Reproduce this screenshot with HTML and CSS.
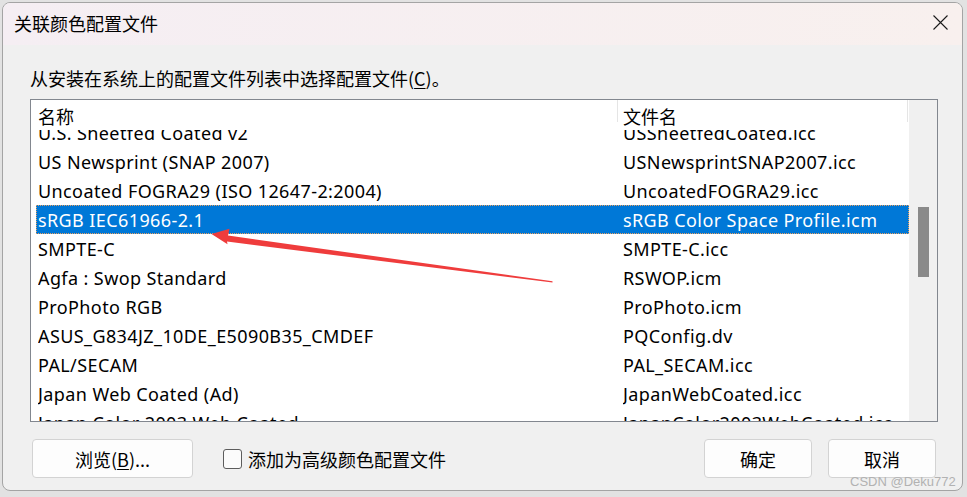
FILE: index.html
```html
<!DOCTYPE html>
<html lang="zh-CN">
<head>
<meta charset="utf-8">
<title>关联颜色配置文件</title>
<link rel="stylesheet" href="styles.css">
</head>
<body>
<div class="page">
  <div class="dialog">
    <div class="titlebar">
      <span class="title">关联颜色配置文件</span>
      <svg class="close" width="15" height="15" viewBox="0 0 15 15"><path d="M0.5 0.5 L14.5 14.5 M14.5 0.5 L0.5 14.5" stroke="#1a1a1a" stroke-width="1.1" fill="none"/></svg>
    </div>
    <div class="body">
      <div class="label">从安装在系统上的配置文件列表中选择配置文件(<u>C</u>)。</div>
      <div class="listview">
        <div class="lv-main">
          <div class="lv-header">
            <div class="hcell hcell-name">名称</div>
            <div class="hcell hcell-file">文件名</div>
          </div>
          <div class="lv-rows">
            <div class="row first"><span class="c1">U.S. Sheetfed Coated v2</span><span class="c2">USSheetfedCoated.icc</span></div>
            <div class="row"><span class="c1">US Newsprint (SNAP 2007)</span><span class="c2">USNewsprintSNAP2007.icc</span></div>
            <div class="row"><span class="c1">Uncoated FOGRA29 (ISO 12647-2:2004)</span><span class="c2">UncoatedFOGRA29.icc</span></div>
            <div class="row selected"><span class="c1">sRGB IEC61966-2.1</span><span class="c2">sRGB Color Space Profile.icm</span></div>
            <div class="row"><span class="c1">SMPTE-C</span><span class="c2">SMPTE-C.icc</span></div>
            <div class="row"><span class="c1">Agfa : Swop Standard</span><span class="c2">RSWOP.icm</span></div>
            <div class="row"><span class="c1">ProPhoto RGB</span><span class="c2">ProPhoto.icm</span></div>
            <div class="row"><span class="c1">ASUS_G834JZ_10DE_E5090B35_CMDEF</span><span class="c2">PQConfig.dv</span></div>
            <div class="row"><span class="c1">PAL/SECAM</span><span class="c2">PAL_SECAM.icc</span></div>
            <div class="row"><span class="c1">Japan Web Coated (Ad)</span><span class="c2">JapanWebCoated.icc</span></div>
            <div class="row"><span class="c1">Japan Color 2003 Web Coated</span><span class="c2">JapanColor2003WebCoated.icc</span></div>
          </div>
        </div>
        <div class="scrollbar"><div class="thumb"></div></div>
      </div>
      <div class="footer">
        <button class="btn btn-browse">浏览(<u>B</u>)...</button>
        <label class="check"><span class="box"></span><span>添加为高级颜色配置文件</span></label>
        <div class="spacer"></div>
        <button class="btn btn-small">确定</button>
        <button class="btn btn-small">取消</button>
      </div>
    </div>
  </div>
  <svg class="arrow" width="967" height="497" viewBox="0 0 967 497">
    <polygon points="211.5,234 229.5,228.8 228,235.6 552.5,281.2 552.5,282.6 227,241.6 227.5,244.2" fill="#ef3c3c"/>
  </svg>
  <div class="watermark">CSDN @Deku772</div>
</div>
</body>
</html>
```

FILE: styles.css
```css
* { box-sizing: border-box; }
html, body { margin: 0; padding: 0; }
body {
  width: 967px;
  height: 497px;
  overflow: hidden;
  background: #e2e2e2;
  font-family: "Noto Sans CJK SC", "Noto Sans", sans-serif;
  color: #000;
}
.page {
  position: relative;
  width: 967px;
  height: 497px;
  padding: 2px 4px 0 2px;
}
.dialog {
  height: 489px;
  border: 1px solid #a4a4a4;
  border-radius: 8px;
  overflow: hidden;
  background: #f0f0f0;
  display: flex;
  flex-direction: column;
}
.titlebar {
  height: 42px;
  flex: none;
  display: flex;
  align-items: flex-start;
  justify-content: space-between;
  padding: 8px 14px 0 11px;
  background: linear-gradient(to right, #f5eef3, #f8f0ee);
}
.title {
  font-size: 18px;
  line-height: 24px;
}
.close { margin-top: 4px; display: block; }
.body {
  flex: 1;
  padding: 0 24px 0 27px;
  display: flex;
  flex-direction: column;
}
.label {
  margin-top: 21px;
  font-size: 18px;
  line-height: 24px;
  white-space: nowrap;
}
.label u, .btn u { text-underline-offset: 2px; }
.listview {
  margin-top: 9px;
  height: 323px;
  border: 1px solid #82878f;
  background: #fff;
  display: flex;
}
.lv-main {
  flex: 1;
  display: flex;
  flex-direction: column;
  min-width: 0;
}
.lv-header {
  height: 30px;
  flex: none;
  display: flex;
  align-items: flex-start;
  background: #fff;
  position: relative;
  z-index: 1;
}
.hcell {
  height: 22px;
  padding-top: 4px;
  font-size: 18px;
  line-height: 24px;
  border-right: 1px solid #e5e5e5;
  white-space: nowrap;
}
.hcell-name { width: 587px; padding-left: 7px; }
.hcell-file { width: 290px; padding-left: 5px; }
.lv-rows {
  flex: 1;
  overflow: hidden;
  font-family: "Noto Sans", "Noto Sans CJK SC", sans-serif;
  font-size: 18px;
  letter-spacing: 0.4px;
}
.row {
  height: 29px;
  margin-left: 5px;
  padding-left: 2px;
  display: flex;
  align-items: center;
  white-space: nowrap;
}
.row.first { margin-top: -12px; }
.row .c1 { width: 585px; flex: none; overflow: hidden; }
.row .c2 { flex: 1; overflow: hidden; }
.row.selected {
  background: #0078d7;
  color: #fff;
  outline: 1px dotted #e8a060;
  outline-offset: -1px;
}
.scrollbar {
  width: 28px;
  flex: none;
  background: #f0f0f0;
  padding-top: 107px;
  display: flex;
  justify-content: center;
}
.thumb {
  width: 11px;
  height: 70px;
  background: #8a8a8a;
}
.footer {
  margin-top: 17px;
  padding: 0 2px;
  display: flex;
  align-items: center;
}
.btn {
  height: 39px;
  border: 1px solid #d3d3d3;
  border-radius: 4px;
  background: #fdfdfd;
  font-family: "Noto Sans CJK SC", "Noto Sans", sans-serif;
  font-size: 18px;
  color: #000;
  padding: 0;
}
.btn-browse { width: 161px; }
.btn-small { width: 108px; }
.btn-small + .btn-small { margin-left: 16px; }
.check {
  margin-left: 30px;
  display: flex;
  align-items: center;
  font-size: 18px;
  line-height: 24px;
}
.box {
  width: 19px;
  height: 20px;
  border: 1px solid #5c5c5c;
  border-radius: 3px;
  background: #fbfbfb;
  margin-right: 6px;
}
.spacer { flex: 1; }
.arrow {
  position: absolute;
  left: 0;
  top: 0;
  pointer-events: none;
}
.watermark {
  position: absolute;
  left: 850px;
  top: 474px;
  font-family: "Liberation Sans", Arial, sans-serif;
  font-size: 13px;
  line-height: 16px;
  color: #b2b2b2;
  white-space: nowrap;
}
```
